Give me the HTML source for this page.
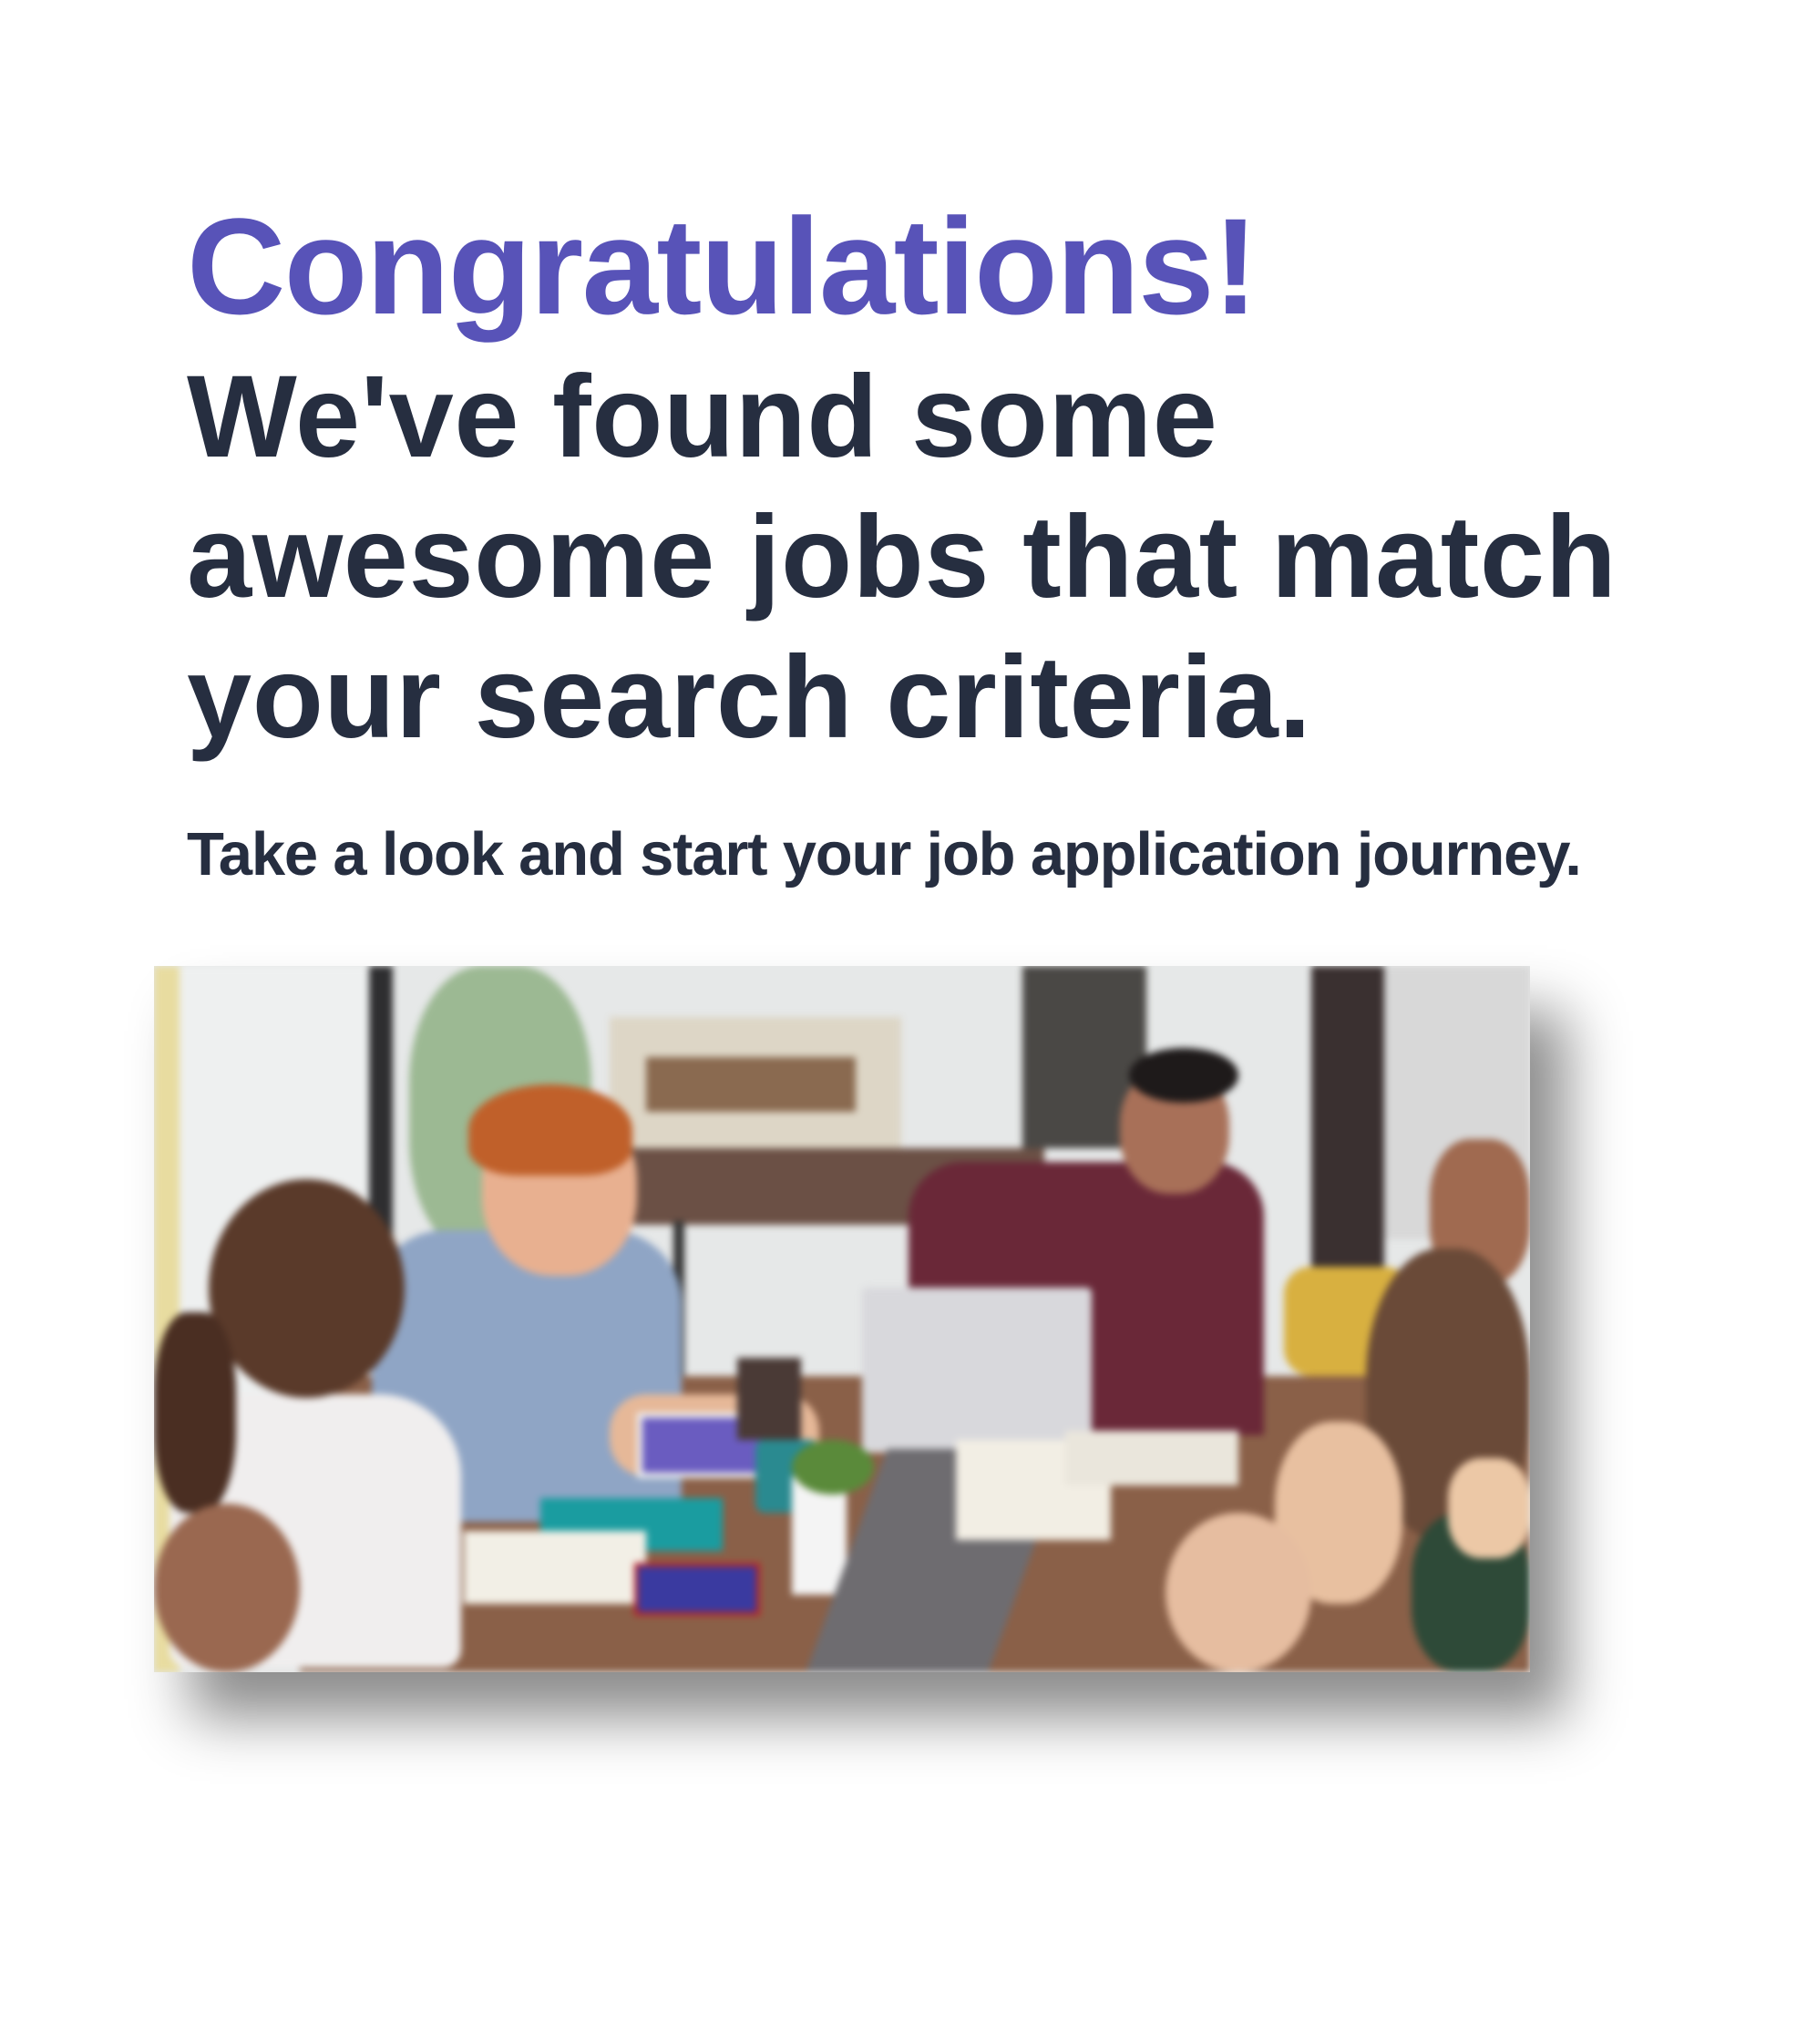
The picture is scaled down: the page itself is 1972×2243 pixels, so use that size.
<!DOCTYPE html>
<html><head><meta charset="utf-8"><style>
html,body{margin:0;padding:0;background:#fff;}
body{width:1972px;height:2243px;position:relative;overflow:hidden;font-family:"Liberation Sans",Arial,sans-serif;}
.t{position:absolute;left:205px;white-space:nowrap;font-weight:bold;margin:0;}
#c1{top:202px;font-size:150px;line-height:180px;color:#5853b8;letter-spacing:-1.6px;}
#c2{top:381px;font-size:128px;line-height:154px;color:#262e40;letter-spacing:0.5px;}
#c3{top:898px;font-size:67px;line-height:80px;color:#262e40;letter-spacing:-1.2px;}
#img{position:absolute;left:169px;top:1060px;width:1510px;height:775px;overflow:hidden;background:#e6e8e8;box-shadow:40px 50px 60px rgba(0,0,0,0.45);}
#img div{position:absolute;}
#in{left:0;top:0;width:1510px;height:775px;filter:blur(4px);}
</style></head><body>
<h1 class="t" id="c1">Congratulations!</h1>
<h2 class="t" id="c2">We've found some<br>awesome jobs that match<br>your search criteria.</h2>
<p class="t" id="c3">Take a look and start your job application journey.</p>
<div id="img"><div id="in">
<div style="left:0;top:0;width:28px;height:775px;background:#e8dca0"></div>
<div style="left:28px;top:0;width:210px;height:500px;background:#eef0f0"></div>
<div style="left:236px;top:0;width:26px;height:320px;background:#2e2e30"></div>
<div style="left:280px;top:0;width:200px;height:320px;background:#6a9a5a;border-radius:40%;opacity:.6"></div>
<div style="left:500px;top:56px;width:320px;height:160px;background:#ddd6c6"></div>
<div style="left:540px;top:100px;width:230px;height:60px;background:#8a6a50"></div>
<div style="left:953px;top:0;width:136px;height:200px;background:#4a4845"></div>
<div style="left:1270px;top:0;width:80px;height:520px;background:#3a3030"></div>
<div style="left:1350px;top:0;width:160px;height:300px;background:#d8d8d8"></div>
<div style="left:517px;top:200px;width:460px;height:84px;background:#6b5045"></div>
<div style="left:570px;top:280px;width:12px;height:200px;background:#333"></div>
<div style="left:160px;top:450px;width:1350px;height:325px;background:#8a6048"></div>
<div style="left:828px;top:215px;width:390px;height:300px;background:#6a2838;border-radius:60px 60px 0 0"></div>
<div style="left:1060px;top:110px;width:120px;height:140px;background:#a87058;border-radius:45%"></div>
<div style="left:1070px;top:90px;width:120px;height:60px;background:#1e1a1a;border-radius:50%"></div>
<div style="left:1240px;top:330px;width:140px;height:120px;background:#d8b040;border-radius:30px"></div>
<div style="left:1400px;top:190px;width:110px;height:160px;background:#a06a50;border-radius:40%"></div>
<div style="left:777px;top:353px;width:252px;height:181px;background:#d8d8dc;border-radius:6px"></div>
<div style="left:239px;top:290px;width:340px;height:320px;background:#8fa5c5;border-radius:80px 80px 20px 20px"></div>
<div style="left:360px;top:150px;width:170px;height:190px;background:#e8b090;border-radius:45%"></div>
<div style="left:345px;top:130px;width:180px;height:100px;background:#c0602a;border-radius:50% 50% 30% 30%"></div>
<div style="left:500px;top:470px;width:230px;height:90px;background:#e6b898;border-radius:40px"></div>
<div style="left:17px;top:470px;width:320px;height:300px;background:#f0eeee;border-radius:90px 90px 20px 20px"></div>
<div style="left:60px;top:234px;width:215px;height:240px;background:#5a3a2a;border-radius:50%"></div>
<div style="left:0;top:380px;width:90px;height:220px;background:#4a2e22;border-radius:40%"></div>
<div style="left:0;top:590px;width:160px;height:185px;background:#9a6850;border-radius:50%"></div>
<div style="left:424px;top:584px;width:200px;height:58px;background:#1a9ca0"></div>
<div style="left:340px;top:620px;width:200px;height:80px;background:#f2efe6"></div>
<div style="left:530px;top:490px;width:140px;height:60px;background:#6a5cc0;border:6px solid #eee"></div>
<div style="left:527px;top:655px;width:130px;height:50px;background:#3a3aa0;border:4px solid #c02020"></div>
<div style="left:640px;top:430px;width:70px;height:90px;background:#4a3a36"></div>
<div style="left:660px;top:520px;width:70px;height:80px;background:#2a8a90;border-radius:10px"></div>
<div style="left:700px;top:560px;width:60px;height:130px;background:#f4f4f4"></div>
<div style="left:700px;top:520px;width:90px;height:60px;background:#5a8a3a;border-radius:50%"></div>
<div style="left:760px;top:530px;width:200px;height:245px;background:#6e6c70;transform:skewX(-20deg)"></div>
<div style="left:880px;top:520px;width:170px;height:110px;background:#f2eee4"></div>
<div style="left:1000px;top:510px;width:190px;height:60px;background:#eae6dc"></div>
<div style="left:1330px;top:310px;width:180px;height:320px;background:#6a4a38;border-radius:45%"></div>
<div style="left:1230px;top:500px;width:140px;height:200px;background:#e8c0a0;border-radius:45%"></div>
<div style="left:1110px;top:600px;width:160px;height:175px;background:#e6bda0;border-radius:50%"></div>
<div style="left:1380px;top:600px;width:130px;height:175px;background:#2e4a38;border-radius:40%"></div>
<div style="left:1420px;top:540px;width:90px;height:110px;background:#ecc8a6;border-radius:40%"></div>
</div></div>
</body></html>
